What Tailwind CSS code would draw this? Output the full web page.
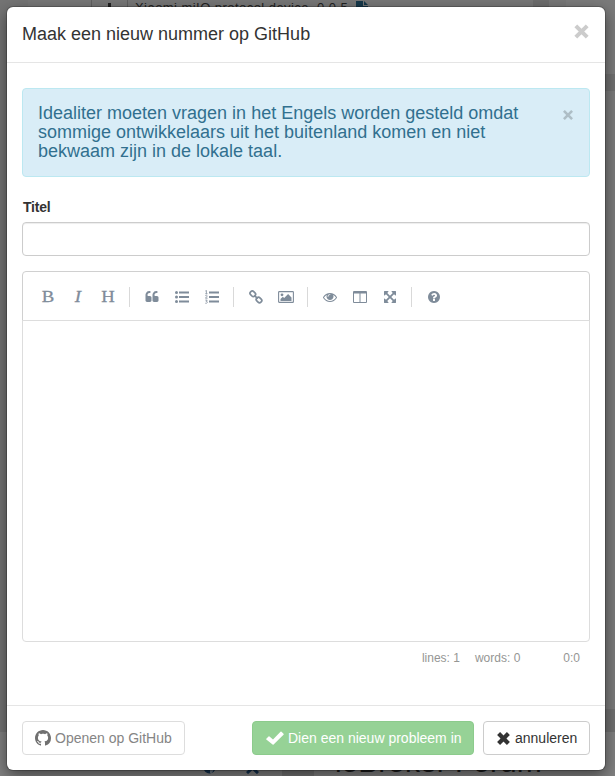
<!DOCTYPE html>
<html lang="nl">
<head>
<meta charset="utf-8">
<title>Maak een nieuw nummer op GitHub</title>
<script src="https://cdn.jsdelivr.net/npm/@tailwindcss/browser@4"></script>
</head>
<body class="relative h-[776px] w-[615px] overflow-hidden bg-[#7a7a7a] font-['Liberation_Sans',Arial,sans-serif] text-sm text-[#333]">

<!-- dimmed page behind the dialog -->
<div class="absolute inset-0 flex flex-col justify-between overflow-hidden" aria-hidden="true">
  <div class="flex h-[732px] shrink-0 bg-[#777]">
    <div class="w-7 bg-[#747474]"></div>
    <div class="relative h-5 w-[538px]">
      <div class="absolute left-[63px] h-5 w-px bg-[#606060]"></div>
      <div class="absolute top-[3px] left-[80px] h-4 w-[3px] bg-[#222]"></div>
      <div class="absolute left-[99px] h-5 w-px bg-[#606060]"></div>
      <div class="absolute top-0 left-[107px] text-[13px] leading-[15px] tracking-[0.45px] whitespace-nowrap text-[#222]">Xiaomi miIO protocol device, 0.0.5</div>
      <svg class="absolute top-[1px] left-[328px]" width="12" height="14" viewBox="0 0 12 14"><path fill="#16384a" d="M0 0h7v5h5v9H0zM8 0l4 4H8z"/></svg>
      <div class="absolute left-[505px] h-5 w-4 bg-[#6d6d6d]"></div>
    </div>
    <div class="flex w-[49px] flex-col">
      <div class="h-[74px] bg-[#7b7b7b]"></div>
      <div class="h-[17px] bg-[#707070]"></div>
      <div class="h-[618px] bg-[#7b7b7b]"></div>
      <div class="h-[23px] bg-[#707070]"></div>
    </div>
  </div>
  <div class="flex h-11 shrink-0 bg-[#808080]">
    <div class="relative w-[282px]">
      <svg class="absolute top-[29px] left-[203px]" width="13" height="13" viewBox="0 0 13 13"><circle cx="6.500" cy="6.500" r="6" fill="#12304e"/><path fill="#6a7682" d="M7 8h4l-2 4H7z"/></svg>
      <svg class="absolute top-[29px] left-[246px]" width="13" height="13" viewBox="0 0 13 13"><path stroke="#12304e" stroke-width="3" d="M1 2l11 10M12 2L1 12"/></svg>
    </div>
    <div class="w-8 bg-[#717171]"></div>
    <div class="pt-[14px] pl-[21px] text-[30px] leading-[31px] whitespace-nowrap text-[#1c1c1c]">ioBroker Forum</div>
  </div>
</div>

<!-- dialog -->
<div class="relative mt-[7px] ml-[7px] flex h-[763px] w-[598px] flex-col rounded-md bg-white shadow-[0_5px_15px_rgba(0,0,0,0.5),0_0_0_1px_rgba(0,0,0,0.2)]">
  <header class="flex h-14 justify-between border-b border-[#e5e5e5] pr-[16px] pl-[15px]">
    <h4 class="pt-[17px] text-[18px] leading-5 whitespace-nowrap">Maak een nieuw nummer op GitHub</h4>
    <svg class="mt-[17px]" width="15" height="15" viewBox="0 0 15 15"><path stroke="#ccc" stroke-width="4" d="M1.800 1.800l11.400 11.400M13.200 1.800L1.800 13.200"/></svg>
  </header>

  <main class="flex h-[642px] flex-col px-[15px] pt-[25px]">
    <div class="flex h-[89px] justify-between rounded border border-[#bce8f1] bg-[#d9edf7] pt-[15px] pr-[16px] pl-[15px] text-[#31708f]">
      <div class="text-[18px] leading-[19px] whitespace-nowrap">Idealiter moeten vragen in het Engels worden gesteld omdat<br>sommige ontwikkelaars uit het buitenland komen en niet<br>bekwaam zijn in de lokale taal.</div>
      <svg class="mt-[6px]" width="10" height="10" viewBox="0 0 10 10"><path stroke="#aebec6" stroke-width="2.600" d="M.9.9l8.200 8.200M9.100.9L.9 9.100"/></svg>
    </div>
    <label class="mt-[20px] h-[26px] pl-px leading-5 font-bold tracking-[-0.2px]">Titel</label>
    <input class="-mt-px h-[34px] w-full shrink-0 rounded border border-[#ccc] bg-white shadow-[inset_0_1px_1px_rgba(0,0,0,0.075)]" type="text">

    <div class="mt-[15px] flex h-[50px] shrink-0 items-center rounded-t border border-[#d0d0d0] px-[10px] pt-px text-[#7f8c9a]">
      <div class="w-[30px] scale-x-110 pt-px text-center font-['Liberation_Serif',serif] text-[17px] [-webkit-text-stroke:0.3px_#7f8c9a]">B</div>
      <div class="w-[30px] scale-x-110 pt-px text-center font-['Liberation_Serif',serif] text-[17px] italic [-webkit-text-stroke:0.3px_#7f8c9a]">I</div>
      <div class="w-[30px] scale-x-110 pt-px text-center font-['Liberation_Serif',serif] text-[17px] [-webkit-text-stroke:0.3px_#7f8c9a]">H</div>
      <div class="mx-[6px] h-5 w-0.5 border-l border-[#d9d9d9]"></div>
      <div class="flex w-[30px] justify-center"><svg width="14" height="14" viewBox="0 0 1792 1792" fill="currentColor"><path d="M832 960v384q0 80-56 136t-136 56h-384q-80 0-136-56t-56-136v-704q0-104 40.500-198.500t109.500-163.500 163.500-109.500 198.500-40.500h64q26 0 45 19t19 45v128q0 26-19 45t-45 19h-64q-106 0-181 75t-75 181v32q0 40 28 68t68 28h224q80 0 136 56t56 136zm896 0v384q0 80-56 136t-136 56h-384q-80 0-136-56t-56-136v-704q0-104 40.500-198.500t109.500-163.500 163.500-109.500 198.500-40.500h64q26 0 45 19t19 45v128q0 26-19 45t-45 19h-64q-106 0-181 75t-75 181v32q0 40 28 68t68 28h224q80 0 136 56t56 136z"/></svg></div>
      <div class="flex w-[30px] justify-center"><svg width="14" height="14" viewBox="0 0 14 14" fill="currentColor"><circle cx="1.500" cy="2.500" r="1.500"/><circle cx="1.500" cy="7" r="1.500"/><circle cx="1.500" cy="11.500" r="1.500"/><path d="M4 1.500h10v2H4zM4 6h10v2H4zM4 10.500h10v2H4z"/></svg></div>
      <div class="flex w-[30px] justify-center"><svg width="14" height="14" viewBox="0 0 14 14" fill="currentColor"><path d="M4 1.500h10v2H4zM4 6h10v2H4zM4 10.500h10v2H4z"/><path fill="none" stroke="currentColor" stroke-width=".8" d="M.4 1l1-.6v3.200M.3 3.700h2.200M.3 5.700q1.200-1.100 1.800 0 .2.800-1.700 2.500h2.200M.3 10.100h1.900l-1 1.200q1.200 0 1.100 1.100-.4 1.300-2 .8"/></svg></div>
      <div class="mx-[6px] h-5 w-0.5 border-l border-[#d9d9d9]"></div>
      <div class="flex w-[30px] justify-center"><svg width="14" height="14" viewBox="0 0 14 14" fill="none" stroke="currentColor" stroke-width="1.700"><rect x="-2.900" y="-2.200" width="5.800" height="4.400" rx="2" transform="translate(3.800 3.800) rotate(45)"/><rect x="-2.900" y="-2.200" width="5.800" height="4.400" rx="2" transform="translate(10 10) rotate(45)"/><path d="M5.300 5.300l3.400 3.400"/></svg></div>
      <div class="flex w-[30px] justify-center"><svg width="16" height="14" viewBox="0 0 16 14" fill="currentColor"><rect x=".6" y="1.600" width="14.800" height="10.800" rx=".7" fill="none" stroke="currentColor" stroke-width="1.100"/><circle cx="4" cy="4.800" r="1.400"/><path d="M2.500 11V9l2.300-2.300L6.200 8l3.900-4 3.400 3.500V11z"/></svg></div>
      <div class="mx-[6px] h-5 w-0.5 border-l border-[#d9d9d9]"></div>
      <div class="flex w-[30px] justify-center"><svg width="14" height="14" viewBox="0 0 1792 1792" fill="currentColor"><path d="M1664 960q-152-236-381-353 61 104 61 225 0 185-131.500 316.500t-316.500 131.500-316.500-131.500-131.500-316.500q0-121 61-225-229 117-381 353 133 205 333.500 326.500t434.500 121.500 434.500-121.500 333.500-326.500zm-720-384q0-20-14-34t-34-14q-125 0-214.500 89.500t-89.500 214.500q0 20 14 34t34 14 34-14 14-34q0-86 61-147t147-61q20 0 34-14t14-34zm848 384q0 34-20 69-140 230-376.500 368.500t-499.500 138.500-499.500-139-376.500-368q-20-35-20-69t20-69q140-229 376.500-368t499.500-139 499.500 139 376.500 368q20 35 20 69z"/></svg></div>
      <div class="flex w-[30px] justify-center"><svg width="14" height="14" viewBox="0 0 14 14"><path fill="currentColor" fill-rule="evenodd" d="M1 1h12q1 0 1 1v10q0 1-1 1H1q-1 0-1-1V2q0-1 1-1zm0 2.500V12h5.500V3.500zm6.500 0V12H13V3.500z"/></svg></div>
      <div class="flex w-[30px] justify-center"><svg width="14" height="14" viewBox="0 0 1792 1792" fill="currentColor"><path d="M1411 541l-355 355 355 355 144-144q29-31 70-14 39 17 39 59v448q0 26-19 45t-45 19h-448q-42 0-59-40-17-39 14-69l144-144-355-355-355 355 144 144q31 30 14 69-17 40-59 40h-448q-26 0-45-19t-19-45v-448q0-42 40-59 39-17 69 14l144 144 355-355-355-355-144 144q-19 19-45 19-12 0-24-5-40-17-40-59v-448q0-26 19-45t45-19h448q42 0 59 40 17 39-14 69l-144 144 355 355 355-355-144-144q-31-30-14-69 17-40 59-40h448q26 0 45 19t19 45v448q0 42-39 59-13 5-25 5-26 0-45-19z"/></svg></div>
      <div class="mx-[6px] h-5 w-0.5 border-l border-[#d9d9d9]"></div>
      <div class="flex w-[30px] justify-center"><svg width="14" height="14" viewBox="0 0 1792 1792" fill="currentColor"><path d="M1024 1376v-192q0-14-9-23t-23-9h-192q-14 0-23 9t-9 23v192q0 14 9 23t23 9h192q14 0 23-9t9-23zm256-672q0-88-55.500-163t-138.500-116-170-41q-243 0-371 213-15 24 8 42l132 100q7 6 19 6 16 0 25-12 53-68 86-92 34-24 86-24 48 0 85.500 26t37.500 59q0 38-20 61t-68 45q-63 28-115.500 86.500t-52.500 125.500v36q0 14 9 23t23 9h192q14 0 23-9t9-23q0-19 21.500-49.500t54.500-49.500q32-18 49-28.500t46-35 44.500-48 28-60.500 12.500-81zm384 192q0 209-103 385.500t-279.500 279.500-385.500 103-385.500-103-279.500-279.500-103-385.500 103-385.500 279.500-279.500 385.500-103 385.500 103 279.500 279.500 103 385.500z"/></svg></div>
    </div>
    <div class="-mt-px h-[322px] shrink-0 rounded-b border border-[#ddd]"></div>
    <div class="flex h-8 items-center justify-end pr-[10px] text-xs text-[#959694]">
      <span>lines: 1</span><span class="ml-[15px]">words: 0</span><span class="ml-[43px]">0:0</span>
    </div>
  </main>

  <footer class="flex h-[65px] justify-end gap-[9px] border-t border-[#e5e5e5] px-[15px] pt-[15px] whitespace-nowrap">
    <button class="mr-auto flex h-[34px] w-[163px] items-center gap-1 rounded border border-[#ddd] pl-[12px] text-[#858585]">
      <svg width="16" height="16" viewBox="0 0 16 16" fill="#707070"><path d="M8 0C3.580 0 0 3.580 0 8c0 3.540 2.290 6.530 5.470 7.590.4.070.55-.17.55-.38 0-.19-.01-.82-.01-1.490-2.010.37-2.530-.49-2.690-.94-.09-.23-.48-.94-.82-1.130-.28-.15-.68-.52-.01-.53.63-.01 1.080.58 1.230.82.72 1.210 1.870.87 2.330.66.070-.52.28-.87.51-1.070-1.780-.2-3.640-.89-3.640-3.950 0-.87.31-1.590.82-2.150-.08-.2-.36-1.020.08-2.120 0 0 .67-.21 2.200.82.64-.18 1.320-.27 2-.27s1.360.09 2 .27c1.530-1.040 2.200-.82 2.200-.82.44 1.100.16 1.920.08 2.120.51.56.82 1.270.82 2.150 0 3.070-1.870 3.750-3.650 3.950.29.25.54.73.54 1.480 0 1.070-.01 1.930-.01 2.200 0 .21.15.46.55.38A8.013 8.013 0 0016 8c0-4.420-3.580-8-8-8z"/></svg>
      <span>Openen op GitHub</span>
    </button>
    <button class="flex h-[34px] w-[222px] items-center gap-1 rounded border border-[#8ccb8c] bg-[#96d296] pl-[13px] text-white">
      <svg width="18" height="14" viewBox="0 0 18 14"><path fill="#fff" d="M.3 7.700l2.200-2.200q.5-.5 1 0L7 8.600 14.500.7q.5-.5 1 0l2 2q.5.500 0 1L7.600 13.500q-.5.500-1 0L.3 8.500q-.4-.4 0-.8z"/></svg>
      <span>Dien een nieuw probleem in</span>
    </button>
    <button class="flex h-[34px] w-[107px] items-center gap-[5px] rounded border border-[#ccc] pl-[13px]">
      <svg width="13" height="13" viewBox="0 0 13 13"><path stroke="#333" stroke-width="4.200" d="M1.600 1.600l9.800 9.800M11.400 1.600L1.600 11.400"/></svg>
      <span>annuleren</span>
    </button>
  </footer>
</div>
</body>
</html>
